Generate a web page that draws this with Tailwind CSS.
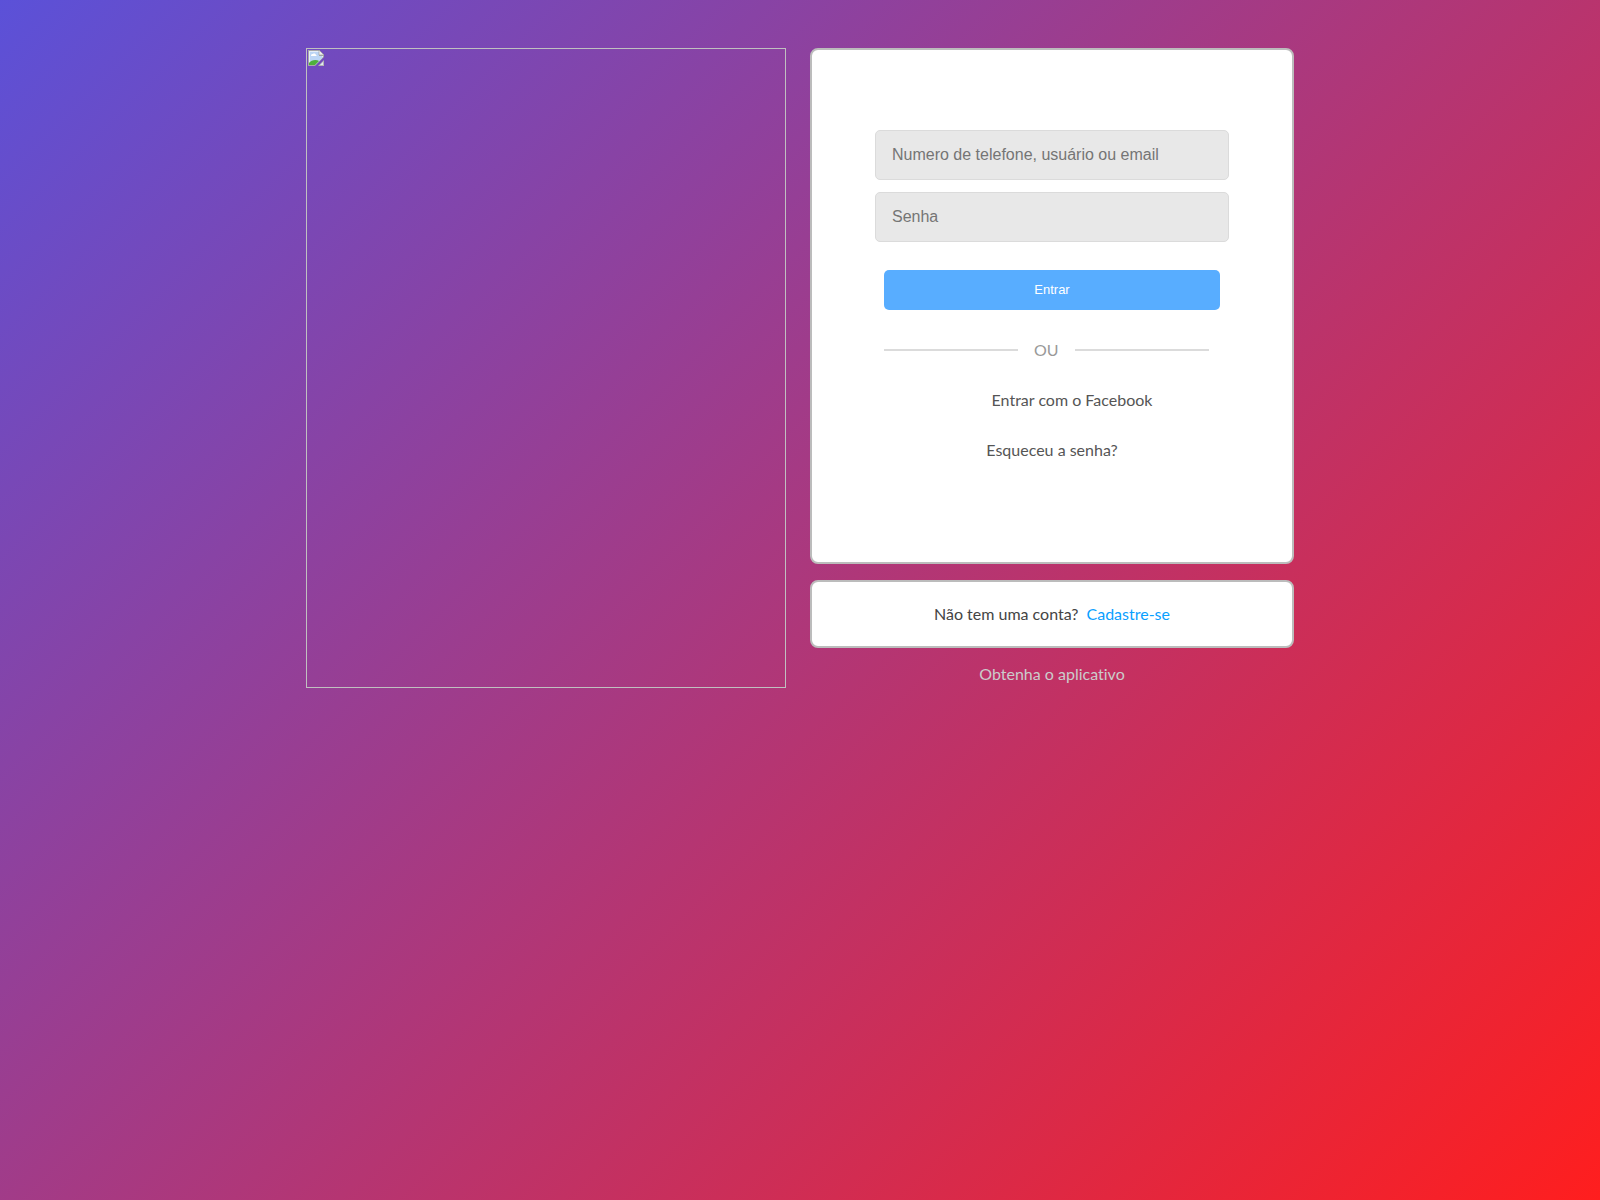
<!DOCTYPE html>
<html lang="pt-br">
    <head>
        <meta charset="UTF-8">
        <meta name="viewport" content="width=device-width, initial-scale=1.0">
        <title>Instagram</title>
        <script src="https://cdn.jsdelivr.net/npm/@tailwindcss/browser@4"></script>
    </head>
    <body class="min-h-screen bg-linear-[135deg,#5b51d8,#ff1e1e] p-12 font-['Trebuchet_MS','Lato',sans-serif] text-base leading-5 [font-variant-ligatures:none]">
        <main class="flex flex-wrap items-start justify-center gap-6">
            <!-- Image -->
            <div class="h-[640px] w-[480px] border border-[#c0c0c0] p-px">
                <svg class="size-4" viewBox="0 0 16 16" role="img" aria-label="Imagem">
                    <path d="M0 0h11l5 5v2l-9 9H0z" fill="#a8a8a8"/>
                    <path d="M1 1h10v5h4v1l-8 8H1z" fill="#e4edf8"/>
                    <path d="M2 2h9v4h3v2l-6 6H2z" fill="#bcd5f5"/>
                    <path d="M3 6c0-2 1-2 2-2 1-1 3 0 3 1 1 0 1 1 0 1z" fill="#fff"/>
                    <path d="M1 15v-2c2-3 7-4 10-2l-4 4z" fill="#4fb03d"/>
                    <path d="M11 0v5h5z" fill="#eee" stroke="#999" stroke-width=".6"/>
                    <path d="M10 16l6-6v6z" fill="#b4b4b4"/>
                    <path d="M12 15l3-3v3z" fill="#dfe9f5"/>
                </svg>
            </div>
            <div class="flex w-[484px] flex-col gap-4">
                <!-- Login -->
                <section class="flex h-[516px] flex-col items-center rounded-lg border-2 border-[#bcbcbc] bg-white pt-20">
                    <form class="flex w-[354px] flex-col items-center gap-3">
                        <input type="text" aria-label="Numero de telefone, usuário ou email" placeholder="Numero de telefone, usuário ou email" class="h-[50px] w-full rounded-[5px] border border-[#dbdbdb] bg-[#e8e8e8] px-4 font-['Liberation_Sans',sans-serif] placeholder:text-[#757575]">
                        <input type="password" aria-label="Senha" placeholder="Senha" class="h-[50px] w-full rounded-[5px] border border-[#dbdbdb] bg-[#e8e8e8] px-4 font-['Liberation_Sans',sans-serif] placeholder:text-[#757575]">
                        <button type="button" class="mt-4 h-10 w-[336px] rounded-[5px] bg-[#58adff] font-['Liberation_Sans',sans-serif] text-[13px] text-white">Entrar</button>
                    </form>
                    <div class="mt-[30px] flex w-[336px] items-center gap-4 text-[#999]">
                        <span class="h-0.5 w-[134px] bg-[#dbdbdb]"></span>
                        <span>OU</span>
                        <span class="h-0.5 w-[134px] bg-[#dbdbdb]"></span>
                    </div>
                    <a href="#" class="mt-[30px] pl-10 text-[#555]">Entrar com o Facebook</a>
                    <a href="#" class="mt-[30px] text-[#555]">Esqueceu a senha?</a>
                </section>
                <!-- Cadastro -->
                <section class="flex h-[68px] items-center justify-center gap-2 rounded-lg border-2 border-[#bcbcbc] bg-white text-[#444]">
                    <p>Não tem uma conta?</p>
                    <a href="#" class="text-[#0aa0ff]">Cadastre-se</a>
                </section>
                <p class="text-center text-[#ccc]">Obtenha o aplicativo</p>
            </div>
        </main>
    </body>
</html>
